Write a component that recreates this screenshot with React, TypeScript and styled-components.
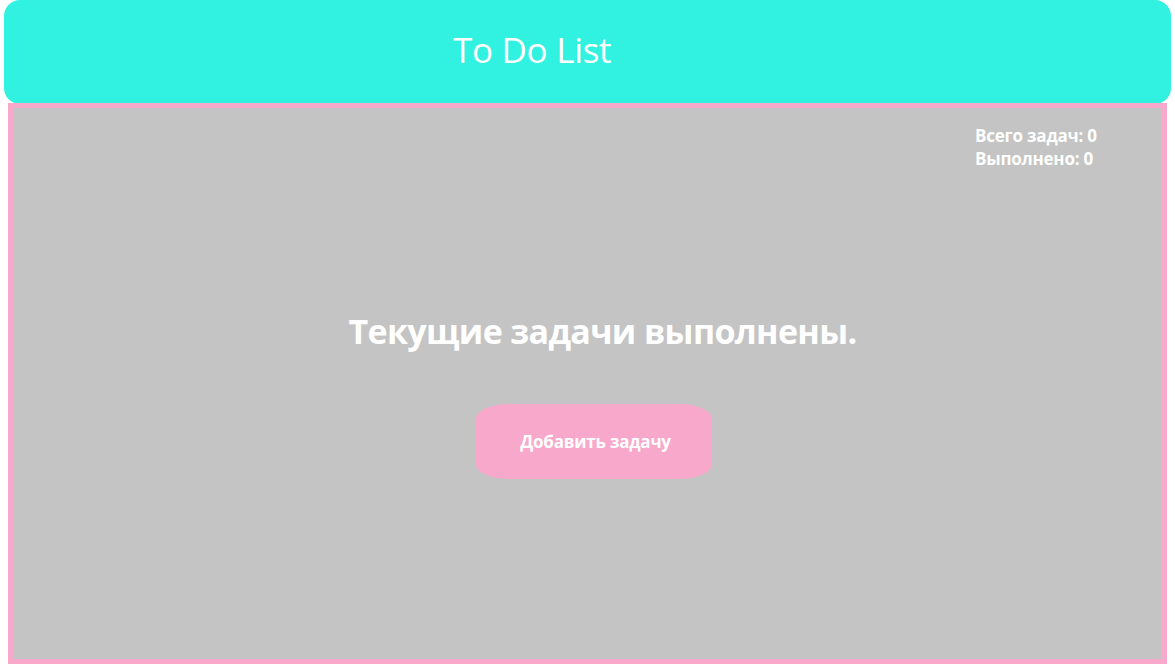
import React from "react";
import styled, { createGlobalStyle } from "styled-components";

const Global = createGlobalStyle`
  html, body { margin: 0; padding: 0; background: #fff; }
  body { padding: 0 8px; font-family: "Open Sans", "Noto Sans", sans-serif; }
`;

const Header = styled.header`
  margin: 0 -4px;
  height: 104px;
  background: #31f1e0;
  border-radius: 16px;
  display: flex;
  align-items: center;
  padding-left: 449px;
  box-sizing: border-box;
`;

const Title = styled.h1`
  margin: 0 0 6px;
  font-weight: 400;
  font-size: 35px;
  color: #fff;
  letter-spacing: -0.3px;
`;

const Main = styled.main`
  height: 561px;
  box-sizing: border-box;
  background: #c4c4c4;
  border: 5px solid #f8a8cb;
  display: flex;
  flex-direction: column;
  align-items: center;
  padding: 16px 0 0;
  margin-top: -1px;
`;

const Stats = styled.div`
  align-self: flex-end;
  margin-right: 40px;
  color: #fff;
  font-weight: 700;
  font-size: 17px;
  line-height: 23px;
  width: 147px;
  letter-spacing: -0.2px;
`;

const Heading = styled.h2`
  margin: 140px 0 0 30px;
  color: #fff;
  font-weight: 700;
  font-size: 34px;
  line-height: 42px;
  letter-spacing: -0.65px;
`;

const AddButton = styled.button`
  margin: 52px 0 0 12px;
  width: 236px;
  height: 75px;
  border: none;
  background: #f8a8cb;
  border-radius: 32px / 15px;
  color: #fff;
  font-family: inherit;
  font-weight: 700;
  font-size: 17px;
  letter-spacing: -0.2px;
  padding: 0 0 0 4px;
  cursor: pointer;
`;

export default function App() {
  return (
    <>
      <Global />
      <Header>
        <Title>To Do List</Title>
      </Header>
      <Main>
        <Stats>
          <div>Всего задач: 0</div>
          <div>Выполнено: 0</div>
        </Stats>
        <Heading>Текущие задачи выполнены.</Heading>
        <AddButton>Добавить задачу</AddButton>
      </Main>
    </>
  );
}
